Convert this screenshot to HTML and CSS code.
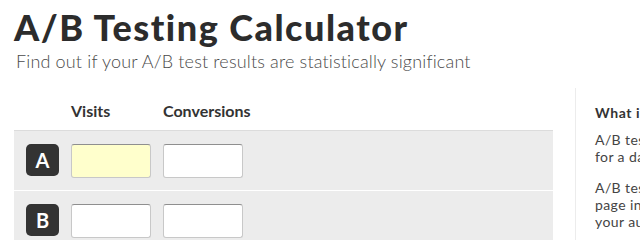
FILE: index.html
```html
<!DOCTYPE html>
<html lang="en">
<head>
<meta charset="utf-8">
<title>A/B Testing Calculator</title>
<link rel="stylesheet" href="styles.css">
</head>
<body>
<div class="page">
  <h1 class="title">A/B Testing Calculator</h1>
  <p class="subtitle">Find out if your A/B test results are statistically significant</p>
  <div class="layout">
    <div class="main">
      <div class="head-row">
        <span class="col-visits">Visits</span>
        <span class="col-conv">Conversions</span>
      </div>
      <div class="rows">
        <div class="row">
          <span class="badge">A</span>
          <input class="field field-active" type="text" aria-label="Visits A">
          <input class="field" type="text" aria-label="Conversions A">
        </div>
        <div class="row">
          <span class="badge">B</span>
          <input class="field" type="text" aria-label="Visits B">
          <input class="field" type="text" aria-label="Conversions B">
        </div>
      </div>
    </div>
    <aside class="sidebar">
      <h2 class="side-title">What is A/B testing?</h2>
      <p class="side-text">A/B testing is a way to compare two versions<br>for a data-driven answer to which one wins.</p>
      <p class="side-text">A/B testing shows two variants of a web<br>page in random order to visitors, then measures<br>your audience's response.</p>
    </aside>
  </div>
</div>
</body>
</html>
```
FILE: styles.css
```css
html, body {
  margin: 0;
  padding: 0;
  background: #fff;
  overflow: hidden;
}
body {
  width: 640px;
  font-family: Lato, "Noto Sans", sans-serif;
  color: #333;
}
.page {
  padding-left: 14px;
}
.title {
  margin: 7px 0 0 0;
  font-size: 36px;
  line-height: 40px;
  font-weight: 900;
  letter-spacing: 1.5px;
  color: #2c2c2c;
  white-space: nowrap;
}
.subtitle {
  margin: 3px 0 0 2px;
  font-size: 18px;
  line-height: 22px;
  font-weight: 300;
  letter-spacing: 0.16px;
  color: #4a4a4a;
  white-space: nowrap;
}
.layout {
  display: flex;
  margin-top: 16px;
  gap: 22px;
}
.main {
  width: 539px;
  flex: none;
  padding-top: 13px;
}
.head-row {
  display: flex;
  height: 20px;
  line-height: 20px;
  font-size: 16px;
  font-weight: 700;
  color: #333;
  margin-bottom: 9px;
  padding-left: 57px;
}
.col-visits {
  width: 92px;
}
.rows {
  background: #ececec;
  border-top: 1px solid #dcdcdc;
}
.row {
  display: flex;
  align-items: flex-start;
  gap: 12px;
  padding: 13px 12px 12px 12px;
  border-bottom: 1px solid #fff;
}
.badge {
  width: 33px;
  height: 32px;
  border-radius: 5px;
  background: #333;
  color: #fff;
  font-size: 20px;
  font-weight: 700;
  line-height: 32px;
  text-align: center;
  flex: none;
}
.field {
  box-sizing: border-box;
  width: 80px;
  height: 34px;
  margin: 0;
  padding: 0 6px;
  border: 1px solid #c8c8c8;
  border-top-color: #8f8f8f;
  border-radius: 3px;
  background: #fff;
  font-family: inherit;
  font-size: 15px;
}
.field-active {
  background: #ffffcc;
}
.sidebar {
  flex: none;
  width: 300px;
  border-left: 1px solid #ececec;
  padding: 16px 0 0 19px;
}
.side-title {
  margin: 0;
  font-size: 14px;
  line-height: 17px;
  font-weight: 700;
  letter-spacing: 0.6px;
  color: #333;
  white-space: nowrap;
}
.side-text {
  margin: 10px 0 0 0;
  font-size: 14px;
  line-height: 17px;
  letter-spacing: 0.4px;
  color: #444;
  white-space: nowrap;
}
.side-text + .side-text {
  margin-top: 14px;
}
```
